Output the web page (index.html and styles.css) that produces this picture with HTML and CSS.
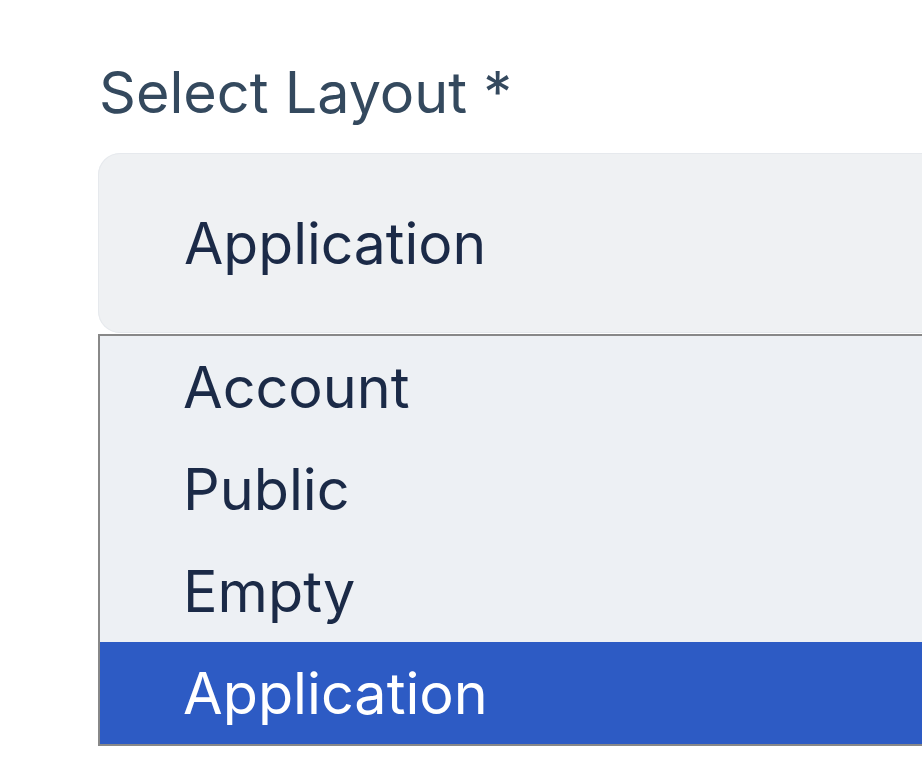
FILE: index.html
```html
<!DOCTYPE html>
<html lang="en">
<head>
<meta charset="utf-8">
<title>Select Layout</title>
<link rel="stylesheet" href="styles.css">
</head>
<body>
<div class="page">
  <div class="field">
    <label class="label">Select Layout *</label>
    <div class="select">
      <span class="select-value">Application</span>
    </div>
    <ul class="listbox">
      <li class="option">Account</li>
      <li class="option">Public</li>
      <li class="option">Empty</li>
      <li class="option selected">Application</li>
    </ul>
  </div>
</div>
</body>
</html>
```
FILE: styles.css
```css
html, body {
  margin: 0;
  padding: 0;
  background: #ffffff;
  overflow: hidden;
}
.page {
  width: 922px;
  height: 770px;
  overflow: hidden;
  font-family: Inter, "Noto Sans", sans-serif;
}
.field {
  display: flex;
  flex-direction: column;
  padding-left: 98px;
  padding-top: 56px;
  width: 1100px;
}
.label {
  font-size: 57.5px;
  line-height: 72px;
  color: #34495e;
  margin-bottom: 25px;
  padding-left: 1px;
}
.select {
  height: 180px;
  background: #eff1f3;
  border-radius: 22px 0 0 22px;
  box-shadow: inset 0 0 0 1px #e6e9ed;
  display: flex;
  align-items: center;
  padding-left: 86px;
}
.select-value {
  font-size: 57px;
  color: #1b2a47;
}
.listbox {
  list-style: none;
  margin: 1px 0 0 0;
  padding: 0;
  border: 2px solid #888888;
  border-right: none;
  background: #edf0f4;
}
.option {
  height: 102px;
  display: flex;
  align-items: center;
  padding-left: 83px;
  font-size: 57.5px;
  color: #1b2a47;
}
.option.selected {
  background: #2d5bc4;
  color: #ffffff;
}
```
